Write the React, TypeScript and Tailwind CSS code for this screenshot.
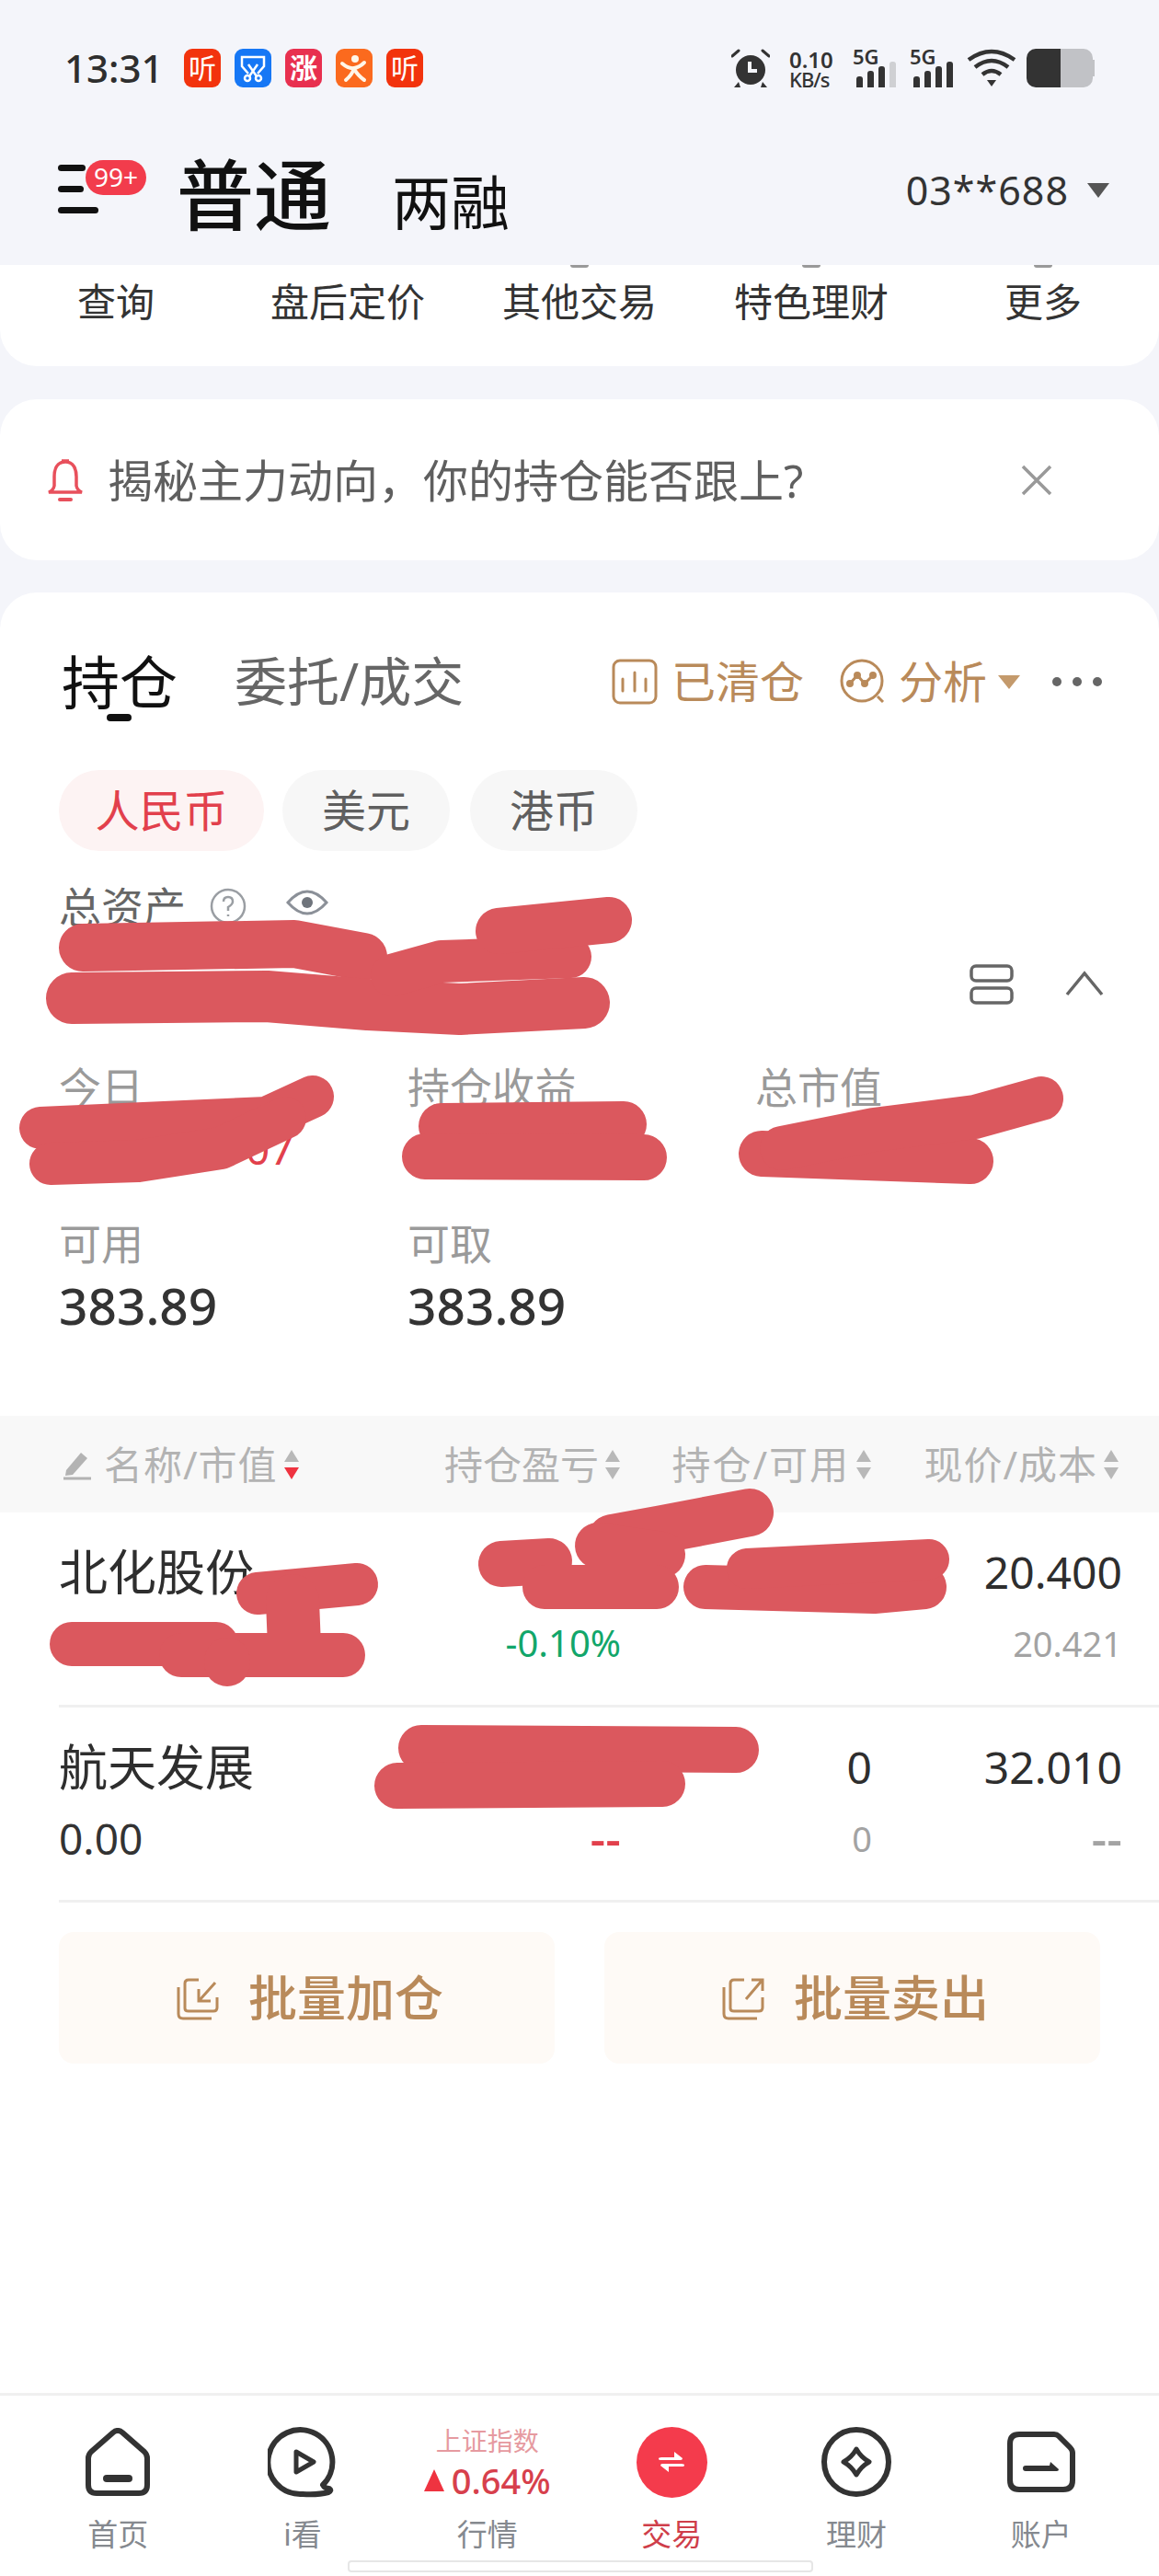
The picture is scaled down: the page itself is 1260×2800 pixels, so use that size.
import React from 'react';

const FONT = '[font-family:"Noto_Sans","Noto_Sans_CJK_SC",sans-serif]';

function NoticeTile({ bg, children }: { bg: string; children: React.ReactNode }) {
  return (
    <div className={`w-[40px] h-[42px] rounded-[9px] flex items-center justify-center overflow-hidden text-white ${bg}`}>
      {children}
    </div>
  );
}

function Signal({ level }: { level: number }) {
  const heights = [12, 18, 23, 28];
  return (
    <div className="flex flex-col w-[48px] h-[42px] relative">
      <span className="absolute left-[-2px] top-[-3px] text-[22px] leading-[22px] font-semibold text-[#333]">5G</span>
      <div className="absolute left-[2px] bottom-0 flex items-end gap-[5px]">
        {heights.map((h, i) => (
          <div
            key={i}
            className={`w-[7px] rounded-t-[3px] ${i < level ? 'bg-[#333]' : 'bg-[#cfd0d3]'}`}
            style={{ height: h }}
          />
        ))}
      </div>
    </div>
  );
}

function StatusBar() {
  return (
    <div className="flex items-center justify-between h-[42px] pl-[70px] pr-[70px]">
      <div className="flex items-center">
        <span className="text-[42px] leading-[42px] font-medium text-[#2e2e2e] w-[130px]">13:31</span>
        <div className="flex gap-[15px]">
          <NoticeTile bg="bg-[#f2330d]"><span className="text-[30px] leading-none">听</span></NoticeTile>
          <NoticeTile bg="bg-[#1677f5]">
            <svg width="30" height="32" viewBox="0 0 30 32" fill="none" stroke="white" strokeWidth="2.5">
              <path d="M10 22 L3 14 V4 H27 V14 L20 22" />
              <path d="M10 12 L19 25 M20 12 L11 25" />
              <circle cx="9" cy="27" r="3" />
              <circle cx="21" cy="27" r="3" />
            </svg>
          </NoticeTile>
          <NoticeTile bg="bg-[#e8304f]"><span className="text-[30px] leading-none font-bold">涨</span></NoticeTile>
          <NoticeTile bg="bg-[#fb6a1e]">
            <svg width="32" height="34" viewBox="0 0 32 34" fill="none" stroke="#fff6e8" strokeWidth="4" strokeLinecap="round">
              <circle cx="17" cy="7" r="4" fill="#fff6e8" stroke="none" />
              <path d="M3 12 Q10 18 16 17 Q22 16 27 11" />
              <path d="M16 17 Q14 24 7 30 M16 18 Q20 25 27 30" />
            </svg>
          </NoticeTile>
          <NoticeTile bg="bg-[#f2330d]"><span className="text-[30px] leading-none">听</span></NoticeTile>
        </div>
      </div>
      <div className="flex items-center">
        <svg width="42" height="42" viewBox="0 0 42 42" className="mr-[23px]">
          <circle cx="21" cy="23" r="16" fill="#333" />
          <path d="M20 14 V24 H28" stroke="#f4f5fa" strokeWidth="4" fill="none" />
          <path d="M1 8 L8 2 M41 8 L34 2" stroke="#333" strokeWidth="3" strokeLinecap="round" />
          <path d="M8 36 L3 42 H10 Z M34 36 L39 42 H32 Z" fill="#333" />
        </svg>
        <div className="flex flex-col w-[69px] -ml-[2px] mr-[2px] text-[#333]">
          <span className="text-[24px] leading-[23px] font-semibold">0.10</span>
          <span className="text-[22px] leading-[20px] font-medium tracking-[-1px]">KB/s</span>
        </div>
        <Signal level={3} />
        <div className="w-[14px]" />
        <Signal level={4} />
        <svg width="54" height="42" viewBox="0 0 54 42" className="ml-[12px]" fill="none" stroke="#333" strokeWidth="4.5">
          <path d="M2 12 Q27 -6 52 12" />
          <path d="M9 20 Q27 6 45 20" />
          <path d="M17 28 Q27 20 37 28" />
          <path d="M22 34 H32 L27 41 Z" fill="#333" stroke="none" />
        </svg>
        <div className="ml-[11px] flex h-[42px] w-[74px] items-center">
          <div className="w-[37px] h-full rounded-l-[10px] bg-[#333]" />
          <div className="w-[35px] h-full rounded-r-[10px] bg-[#c1c2c6]" />
          <div className="w-[2px] h-[18px] bg-[#c1c2c6]" />
        </div>
      </div>
    </div>
  );
}

function Header() {
  return (
    <div className="h-[288px] bg-[#f4f5fa] pt-[53px] shrink-0">
      <StatusBar />
      <div className="relative flex items-end h-[80px] mt-[77px] pl-[192px] pr-[54px]">
        <div className="absolute left-[63px] top-[7px] flex flex-col gap-[16px]">
          <div className="w-[30px] h-[7px] rounded-full bg-[#111]" />
          <div className="w-[28px] h-[7px] rounded-full bg-[#111]" />
          <div className="w-[44px] h-[7px] rounded-full bg-[#111]" />
        </div>
        <div className="absolute left-[93px] top-[2px] w-[66px] h-[38px] rounded-[19px] bg-[#f23c4c] text-white text-[28px] leading-[36px] text-center">
          99+
        </div>
        <span className="text-[84px] leading-[80px] font-medium text-[#111] w-[234px]">普通</span>
        <span className="text-[64px] leading-[64px] text-[#111]">两融</span>
        <div className="ml-auto flex items-center self-start mt-[10px]">
          <span className="text-[43px] leading-[50px] text-[#333] tracking-[1px]">03**688</span>
          <svg width="24" height="18" viewBox="0 0 24 18" className="ml-[20px]"><path d="M0 1 H24 L12 17 Z" fill="#555" /></svg>
        </div>
      </div>
    </div>
  );
}

function TopShortcuts() {
  const items = ['查询', '盘后定价', '其他交易', '特色理财', '更多'];
  return (
    <div className="relative h-[110px] bg-white rounded-b-[40px] grid grid-cols-5 shrink-0">
      {items.map((t, i) => (
        <div key={t} className="relative text-center text-[42px] leading-[50px] pt-[15px] text-[#333]">
          {t}
          {i >= 2 && i <= 4 && <div className="absolute left-1/2 top-0 -ml-[10px] w-[20px] h-[3px] rounded-b-[10px] bg-[#999]" />}
        </div>
      ))}
    </div>
  );
}

function Banner() {
  return (
    <div className="h-[175px] mt-[36px] bg-white rounded-[40px] flex items-center pl-[50px] pr-[116px] shrink-0">
      <svg width="42" height="48" viewBox="0 0 42 48" fill="none" stroke="#e8505c" strokeWidth="3.5" className="mr-[25px]">
        <path d="M21 4 C12 4 9 12 9 20 V30 Q8 35 3 37 H39 Q34 35 33 30 V20 C33 12 30 4 21 4 Z" />
        <path d="M17 3 H25" />
        <path d="M15 45 H27" strokeWidth="4" strokeLinecap="round" />
      </svg>
      <span className="text-[49px] leading-[60px] text-[#5f5f5f] whitespace-nowrap">揭秘主力动向，你的持仓能否跟上?</span>
      <svg width="34" height="34" viewBox="0 0 34 34" className="ml-auto" stroke="#999" strokeWidth="3.5">
        <path d="M2 2 L32 32 M32 2 L2 32" />
      </svg>
    </div>
  );
}

function SortArrows({ active }: { active?: boolean }) {
  return (
    <svg width="18" height="36" viewBox="0 0 18 36" className="ml-[6px] shrink-0">
      <path d="M9 2 L17 15 H1 Z" fill="#b8b8b8" />
      <path d="M1 21 H17 L9 34 Z" fill={active ? '#ef3340' : '#b8b8b8'} />
    </svg>
  );
}

function Metric({ label, children }: { label: string; children?: React.ReactNode }) {
  return (
    <div>
      <div className="text-[46px] leading-[50px] text-[#9a9a9a]">{label}</div>
      {children}
    </div>
  );
}

type RowProps = { name: string; sub: string; a: string; aColor: string; qty: string; price: string; cost: string };

function PositionRow({ name, sub, a, aColor, qty, price, cost }: RowProps) {
  const dashes = 'text-[52px] font-medium';
  return (
    <div className="ml-[64px] border-b-[3px] border-[#f0f0f0] h-[212px] grid grid-cols-[371px_240px_273px_272px] pt-[30px] box-border">
      <div>
        <div className="text-[53px] leading-[70px] text-[#2e2e2e]">{name}</div>
        <div className="text-[46px] leading-[60px] mt-[12px] text-[#333]">{sub}</div>
      </div>
      <div className="text-right">
        <div className="h-[70px]" />
        <div className={`leading-[60px] mt-[12px] ${aColor} ${a === '--' ? dashes : 'text-[40px]'}`}>{a}</div>
      </div>
      <div className="text-right">
        <div className="text-[48px] leading-[70px] text-[#2e2e2e]">{qty}</div>
        <div className="text-[38px] leading-[60px] mt-[12px] text-[#a3a3a3]">0</div>
      </div>
      <div className="text-right">
        <div className="text-[48px] leading-[70px] text-[#2e2e2e]">{price}</div>
        <div className={`leading-[60px] mt-[12px] text-[#a3a3a3] ${cost === '--' ? dashes : 'text-[38px]'}`}>{cost}</div>
      </div>
    </div>
  );
}

function BatchButton({ label, out }: { label: string; out?: boolean }) {
  return (
    <div className="w-[539px] h-[143px] rounded-[16px] bg-[#fefaf6] flex items-center justify-center gap-[30px] pl-[5px]">
      <svg width="50" height="50" viewBox="0 0 50 50" fill="none" stroke="#b98a5a" strokeWidth="3">
        <path d="M26 5 H15 Q11 5 11 9 V36 Q11 39 15 39 H42 Q46 39 46 35 V24" />
        <path d="M4 13 V42 Q4 47 9 47 H40" />
        {out ? <path d="M28 26 L45 6 M34 5 H46 V17" /> : <path d="M44 8 L27 27 M26 15 V28 H39" />}
      </svg>
      <span className="text-[53px] leading-[60px] font-medium text-[#b98a5a]">{label}</span>
    </div>
  );
}

function MainCard() {
  return (
    <div className="flex-1 mt-[35px] bg-white rounded-t-[40px] pt-[62px]">
      <div className="relative flex items-center h-[70px] pl-[67px] pr-[62px]">
        <span className="text-[63px] leading-[70px] text-[#111]">持仓</span>
        <div className="absolute left-[116px] top-[70px] w-[27px] h-[8px] rounded-[4px] bg-[#111]" />
        <span className="ml-[62px] text-[57px] leading-[70px] text-[#666] -mt-[2px]">委托/成交</span>
        <svg width="50" height="50" viewBox="0 0 50 50" fill="none" stroke="#b98a5a" strokeWidth="3" strokeLinecap="round" className="ml-auto mr-[15px]">
          <rect x="2" y="2" width="46" height="46" rx="7" />
          <path d="M12 22 V35 M25 15 V35 M37 22 V35" />
        </svg>
        <span className="text-[48px] leading-[70px] text-[#b98a5a] mr-[38px]">已清仓</span>
        <svg width="52" height="52" viewBox="0 0 52 52" fill="none" stroke="#b98a5a" strokeWidth="3" className="mr-[13px]">
          <circle cx="25" cy="25" r="22" />
          <path d="M12 28 L20 19 L28 28 L37 19" />
          <circle cx="12" cy="28" r="2.5" fill="#b98a5a" />
          <circle cx="20" cy="19" r="2.5" fill="#b98a5a" />
          <circle cx="28" cy="28" r="2.5" fill="#b98a5a" />
          <circle cx="37" cy="19" r="2.5" fill="#b98a5a" />
          <path d="M42 42 L48 48" />
        </svg>
        <span className="text-[48px] leading-[70px] text-[#b98a5a]">分析</span>
        <svg width="24" height="16" viewBox="0 0 24 16" className="ml-[12px] mr-[35px]"><path d="M0 1 H24 L12 16 Z" fill="#c49a6c" /></svg>
        <div className="flex gap-[12px]">
          <div className="w-[10px] h-[10px] rounded-full bg-[#666]" />
          <div className="w-[10px] h-[10px] rounded-full bg-[#666]" />
          <div className="w-[10px] h-[10px] rounded-full bg-[#666]" />
        </div>
      </div>

      <div className="flex gap-[20px] mt-[61px] pl-[64px]">
        <div className="w-[223px] h-[88px] rounded-[44px] bg-[#fdf3f3] text-[#e2404c] text-[48px] leading-[88px] text-center">人民币</div>
        <div className="w-[182px] h-[88px] rounded-[44px] bg-[#f7f7f7] text-[#5f5f5f] text-[48px] leading-[88px] text-center">美元</div>
        <div className="ml-[2px] w-[182px] h-[88px] rounded-[44px] bg-[#f7f7f7] text-[#5f5f5f] text-[48px] leading-[88px] text-center">港币</div>
      </div>

      <div className="flex items-center h-[50px] mt-[35px] pl-[64px]">
        <span className="text-[46px] leading-[50px] text-[#666]">总资产</span>
        <svg width="40" height="40" viewBox="0 0 40 40" fill="none" className="ml-[26px]">
          <circle cx="20" cy="20" r="18" stroke="#9a9ea3" strokeWidth="2.5" />
          <path d="M15 15 Q15 10 20 10 Q25 10 25 15 Q25 18 20 21 V25 M20 29 V31" stroke="#9a9ea3" strokeWidth="2.5" />
        </svg>
        <svg width="46" height="32" viewBox="0 0 46 32" fill="none" className="ml-[43px] -mt-[8px]">
          <path d="M2 16 Q23 -8 44 16 Q23 40 2 16 Z" stroke="#8b9098" strokeWidth="3" />
          <circle cx="23" cy="16" r="6" fill="#6f747c" />
        </svg>
      </div>

      <div className="h-[145px] flex items-start justify-end pr-[60px] pt-[38px]">
        <svg width="48" height="44" viewBox="0 0 48 44" fill="none" stroke="#666" strokeWidth="3.5">
          <rect x="2" y="2" width="44" height="16" rx="5" />
          <rect x="2" y="26" width="44" height="16" rx="5" />
        </svg>
        <svg width="42" height="28" viewBox="0 0 42 28" fill="none" stroke="#666" strokeWidth="3.5" className="ml-[56px] mt-[7px]">
          <path d="M2 26 L21 3 L40 26" />
        </svg>
      </div>

      <div className="grid grid-cols-[379px_378px_1fr] pl-[64px] pt-[1px]">
        <Metric label="今日">
          <div className="h-[84px] text-[46px] leading-[85px] pl-[203px] text-[#e2404c]">07</div>
        </Metric>
        <Metric label="持仓收益"><div className="h-[84px]" /></Metric>
        <Metric label="总市值"><div className="h-[84px]" /></Metric>
      </div>

      <div className="grid grid-cols-[379px_1fr] pl-[64px] mt-[36px]">
        <Metric label="可用">
          <div className="text-[55px] leading-[70px] mt-[8px] font-medium text-[#333]">383.89</div>
        </Metric>
        <Metric label="可取">
          <div className="text-[55px] leading-[70px] mt-[8px] font-medium text-[#333]">383.89</div>
        </Metric>
      </div>

      <div className="mt-[85px] h-[105px] bg-[#f8f8f8] grid grid-cols-[371px_240px_273px_272px] pl-[64px] items-center text-[42px] text-[#b3b3b3]">
        <div className="flex items-center">
          <svg width="36" height="36" viewBox="0 0 36 36" className="ml-[2px] mr-[11px]">
            <path d="M6 24 L22 5 L29 11 L13 29 L5 30 Z" fill="#b3b3b3" />
            <path d="M3 33 H33" stroke="#b3b3b3" strokeWidth="3" />
          </svg>
          <span className="tracking-[1px]">名称/市值</span>
          <SortArrows active />
        </div>
        <div className="flex items-center justify-end"><span>持仓盈亏</span><SortArrows /></div>
        <div className="flex items-center justify-end"><span className="tracking-[2px]">持仓/可用</span><SortArrows /></div>
        <div className="flex items-center justify-end -translate-x-[3px]"><span className="tracking-[1px]">现价/成本</span><SortArrows /></div>
      </div>

      <PositionRow name="北化股份" sub="" a="-0.10%" aColor="text-[#12a66a]" qty="" price="20.400" cost="20.421" />
      <PositionRow name="航天发展" sub="0.00" a="--" aColor="text-[#e2404c]" qty="0" price="32.010" cost="--" />

      <div className="flex justify-between pl-[64px] pr-[64px] mt-[32px]">
        <BatchButton label="批量加仓" />
        <BatchButton label="批量卖出" out />
      </div>
    </div>
  );
}

function NavItem({ label, active, children }: { label: string; active?: boolean; children: React.ReactNode }) {
  return (
    <div className="flex flex-col items-center">
      <div className="h-[80px] flex items-center justify-center">{children}</div>
      <span className={`mt-[19px] text-[33px] leading-[40px] ${active ? 'text-[#cf3e4a]' : 'text-[#85898f]'}`}>{label}</span>
    </div>
  );
}

function BottomNav() {
  return (
    <div className="relative h-[199px] shrink-0 border-t-[3px] border-[#f0f0f0] bg-white grid grid-cols-6 px-[28px] pt-[32px]">
      <NavItem label="首页">
        <svg width="70" height="74" viewBox="0 0 70 74" fill="none" stroke="#333" strokeWidth="6" strokeLinejoin="round">
          <path d="M30 5 Q35 1 40 5 L64 26 Q67 29 67 33 V62 Q67 71 58 71 H12 Q3 71 3 62 V33 Q3 29 6 26 Z" />
          <path d="M23 55 H47" strokeWidth="8" strokeLinecap="round" />
        </svg>
      </NavItem>
      <NavItem label="i看">
        <svg width="76" height="78" viewBox="0 0 76 78" fill="none" stroke="#333" strokeWidth="6" strokeLinejoin="round">
          <path d="M60 64 A35 35 0 1 0 38 74 Q55 75 66 72 Q70 70 67 68 Q62 68 60 64 Z" />
          <path d="M31 28 L50 39 L31 50 Z" strokeWidth="5" />
        </svg>
      </NavItem>
      <div className="flex flex-col items-center">
        <span className="text-[28px] leading-[32px] mt-[1px] text-[#e69aa0]">上证指数</span>
        <div className="flex items-center h-[46px] mt-[4px]">
          <svg width="22" height="24" viewBox="0 0 22 24" className="mr-[8px]"><path d="M11 0 L22 24 H0 Z" fill="#ef3340" /></svg>
          <span className="text-[38px] leading-[46px] font-medium text-[#d7404c]">0.64%</span>
        </div>
        <span className="mt-[16px] text-[33px] leading-[40px] text-[#85898f]">行情</span>
      </div>
      <NavItem label="交易" active>
        <div className="w-[77px] h-[77px] rounded-full bg-[#f43b4c] flex items-center justify-center">
          <svg width="30" height="30" viewBox="0 0 30 30" fill="white">
            <path d="M4 10 H18 V4 L27 11 Q27 13 25 13 H4 Q1 13 1 11.5 Q1 10 4 10 Z" />
            <path d="M26 20 H12 V26 L3 19 Q3 17 5 17 H26 Q29 17 29 18.5 Q29 20 26 20 Z" />
          </svg>
        </div>
      </NavItem>
      <NavItem label="理财">
        <svg width="78" height="78" viewBox="0 0 78 78" fill="none" stroke="#333" strokeWidth="6" strokeLinejoin="round">
          <circle cx="39" cy="39" r="35" />
          <path d="M39 25 Q44 34 53 39 Q44 44 39 53 Q34 44 25 39 Q34 34 39 25 Z" strokeWidth="5" />
        </svg>
      </NavItem>
      <NavItem label="账户">
        <svg width="74" height="66" viewBox="0 0 74 66" fill="none" stroke="#333" strokeWidth="6" strokeLinejoin="round">
          <path d="M13 3 H51 Q54 3 56 5 L68 17 Q71 20 71 23 V53 Q71 63 61 63 H13 Q3 63 3 53 V13 Q3 3 13 3 Z" />
          <path d="M20 37 H46 L47 33 L56 41 Q56 43 54 43 H20 Q17 43 17 40 Q17 37 20 37 Z" fill="#333" stroke="none" />
        </svg>
      </NavItem>
      <div className="absolute left-[378px] top-[179px] w-[506px] h-[13px] rounded-[4px] bg-white border-[2px] border-[#e6e6e6]" />
    </div>
  );
}

// red marker strokes drawn over the private numbers
function Redactions() {
  const strokes: [string, number][] = [
    ['M90 1030 L320 1026 L395 1040', 52],
    ['M78 1085 L290 1083 L400 1092 L500 1097 L635 1090', 56],
    ['M426 1060 L480 1045 L620 1040', 46],
    ['M542 1012 L662 1000', 50],
    ['M44 1226 L290 1215 L340 1192', 46],
    ['M55 1265 L150 1262 L240 1248 L310 1215', 46],
    ['M480 1224 L678 1222', 50],
    ['M462 1257 L700 1258', 50],
    ['M828 1254 L1055 1262', 50],
    ['M850 1248 L950 1228 L1060 1214 L1132 1194', 48],
    ['M280 1732 L388 1722', 46],
    ['M318 1740 L320 1790', 58],
    ['M78 1787 L235 1787', 48],
    ['M197 1799 L373 1799', 48],
    ['M247 1805 L247 1808', 50],
    ['M545 1700 L597 1697', 50],
    ['M665 1672 L720 1662 L815 1644', 52],
    ['M650 1680 L720 1690', 50],
    ['M592 1725 L714 1725', 48],
    ['M767 1725 L950 1730 L1005 1725', 48],
    ['M812 1705 L1010 1695', 44],
    ['M458 1900 L800 1902', 50],
    ['M432 1941 L720 1939', 50],
  ];
  return (
    <svg className="absolute inset-0 pointer-events-none" width="1260" height="2800" viewBox="0 0 1260 2800" fill="none">
      {strokes.map(([d, w], i) => (
        <path key={i} d={d} stroke="#db585e" strokeWidth={w} strokeLinecap="round" strokeLinejoin="round" />
      ))}
    </svg>
  );
}

export default function App() {
  return (
    <div className={`relative w-[1260px] h-[2800px] bg-[#f4f5fa] overflow-hidden flex flex-col ${FONT}`}>
      <Header />
      <TopShortcuts />
      <Banner />
      <MainCard />
      <BottomNav />
      <Redactions />
    </div>
  );
}
